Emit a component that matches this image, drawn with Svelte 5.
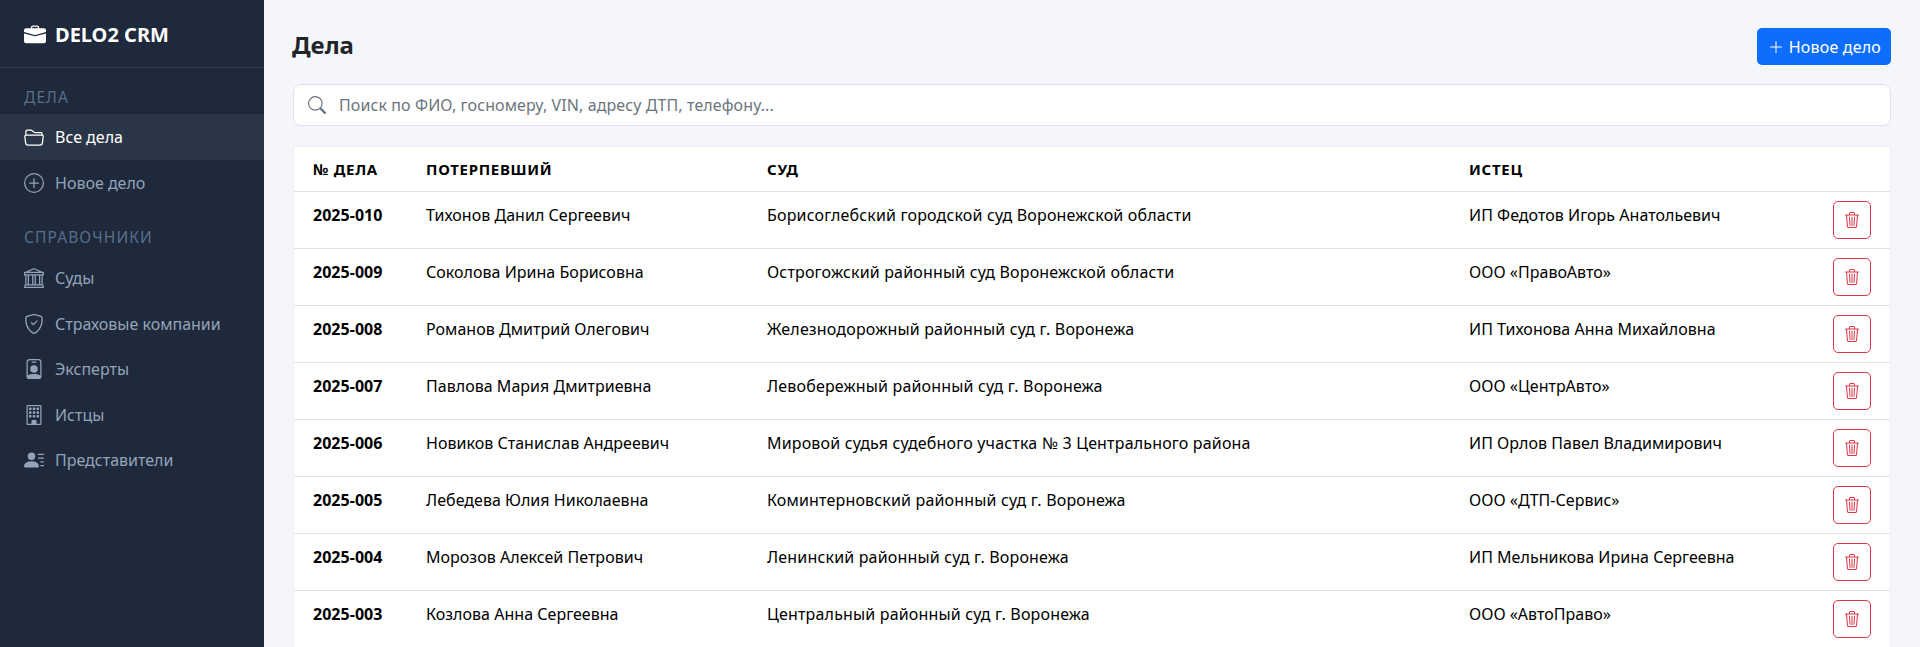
<script>
  const cases = [
    ['2025-010','Тихонов Данил Сергеевич','Борисоглебский городской суд Воронежской области','ИП Федотов Игорь Анатольевич'],
    ['2025-009','Соколова Ирина Борисовна','Острогожский районный суд Воронежской области','ООО «ПравоАвто»'],
    ['2025-008','Романов Дмитрий Олегович','Железнодорожный районный суд г. Воронежа','ИП Тихонова Анна Михайловна'],
    ['2025-007','Павлова Мария Дмитриевна','Левобережный районный суд г. Воронежа','ООО «ЦентрАвто»'],
    ['2025-006','Новиков Станислав Андреевич','Мировой судья судебного участка № 3 Центрального района','ИП Орлов Павел Владимирович'],
    ['2025-005','Лебедева Юлия Николаевна','Коминтерновский районный суд г. Воронежа','ООО «ДТП-Сервис»'],
    ['2025-004','Морозов Алексей Петрович','Ленинский районный суд г. Воронежа','ИП Мельникова Ирина Сергеевна'],
    ['2025-003','Козлова Анна Сергеевна','Центральный районный суд г. Воронежа','ООО «АвтоПраво»']
  ];
  const winX = [4, 7, 10];
  const winY = [2, 5, 8];
</script>

<div class="layout">
  <aside class="sidebar">
    <div class="brand">
      <svg class="brand-ico" viewBox="0 0 16 16" fill="currentColor"><path d="M6.5 1A1.5 1.5 0 0 0 5 2.5V3H1.5A1.5 1.5 0 0 0 0 4.5v1.384l7.614 2.03a1.5 1.5 0 0 0 .772 0L16 5.884V4.5A1.5 1.5 0 0 0 14.5 3H11v-.5A1.5 1.5 0 0 0 9.5 1h-3zm0 1h3a.5.5 0 0 1 .5.5V3H6v-.5a.5.5 0 0 1 .5-.5z"/><path d="M0 12.5A1.5 1.5 0 0 0 1.5 14h13a1.5 1.5 0 0 0 1.5-1.5V6.85L8.129 8.947a.5.5 0 0 1-.258 0L0 6.85v5.65z"/></svg>
      <span>DELO2 CRM</span>
    </div>
    <div class="label first">ДЕЛА</div>
    <a class="item active">
      <svg viewBox="0 0 16 16" fill="currentColor"><path d="M1 3.5A1.5 1.5 0 0 1 2.5 2h2.764c.958 0 1.76.56 2.311 1.184C7.985 3.648 8.48 4 9 4h4.5A1.5 1.5 0 0 1 15 5.5v.64c.57.265.94.876.856 1.546l-.64 5.124A2.5 2.5 0 0 1 12.733 15H3.266a2.5 2.5 0 0 1-2.481-2.19l-.64-5.124A1.5 1.5 0 0 1 1 6.14V3.5zM2 6h12v-.5a.5.5 0 0 0-.5-.5H9c-.964 0-1.71-.629-2.174-1.154C6.374 3.334 5.82 3 5.264 3H2.5a.5.5 0 0 0-.5.5V6zm-.367 1a.5.5 0 0 0-.496.562l.64 5.124A1.5 1.5 0 0 0 3.266 14h9.468a1.5 1.5 0 0 0 1.489-1.314l.64-5.124A.5.5 0 0 0 14.367 7H1.633z"/></svg>
      Все дела
    </a>
    <a class="item">
      <svg viewBox="0 0 16 16" fill="currentColor"><path d="M8 15A7 7 0 1 1 8 1a7 7 0 0 1 0 14zm0 1A8 8 0 1 0 8 0a8 8 0 0 0 0 16z"/><path d="M8 4a.5.5 0 0 1 .5.5v3h3a.5.5 0 0 1 0 1h-3v3a.5.5 0 0 1-1 0v-3h-3a.5.5 0 0 1 0-1h3v-3A.5.5 0 0 1 8 4z"/></svg>
      Новое дело
    </a>
    <div class="label">СПРАВОЧНИКИ</div>
    <a class="item">
      <svg viewBox="0 0 16 16" fill="currentColor"><path d="m8 0 6.61 3h.89a.5.5 0 0 1 .5.5v2a.5.5 0 0 1-.5.5H15v7a.5.5 0 0 1 .485.38l.5 2a.498.498 0 0 1-.485.62H.5a.498.498 0 0 1-.485-.62l.5-2A.501.501 0 0 1 1 13V6H.5a.5.5 0 0 1-.5-.5v-2A.5.5 0 0 1 .5 3h.89L8 0ZM3.777 3h8.447L8 1 3.777 3ZM2 6v7h1V6H2Zm2 0v7h2.5V6H4Zm3.5 0v7h1V6h-1Zm2 0v7H12V6H9.5ZM13 6v7h1V6h-1Zm2-1V4H1v1h14Zm-.39 9H1.39l-.25 1h13.72l-.25-1Z"/></svg>
      Суды
    </a>
    <a class="item">
      <svg viewBox="0 0 16 16" fill="currentColor"><path d="M5.338 1.59a61.44 61.44 0 0 0-2.837.856.481.481 0 0 0-.328.39c-.554 4.157.726 7.19 2.253 9.188a10.725 10.725 0 0 0 2.287 2.233c.346.244.652.42.893.533.12.057.218.095.293.118a.55.55 0 0 0 .101.025.615.615 0 0 0 .1-.025c.076-.023.174-.061.294-.118.24-.113.547-.29.893-.533a10.726 10.726 0 0 0 2.287-2.233c1.527-1.997 2.807-5.031 2.253-9.188a.48.48 0 0 0-.328-.39c-.651-.213-1.75-.56-2.837-.855C9.552 1.29 8.531 1.067 8 1.067c-.53 0-1.552.223-2.662.524zM5.072.56C6.157.265 7.31 0 8 0s1.843.265 2.928.56c1.11.3 2.229.655 2.887.87a1.54 1.54 0 0 1 1.044 1.262c.596 4.477-.787 7.795-2.465 9.99a11.775 11.775 0 0 1-2.517 2.453 7.159 7.159 0 0 1-1.048.625c-.28.132-.581.24-.829.24s-.548-.108-.829-.24a7.158 7.158 0 0 1-1.048-.625 11.777 11.777 0 0 1-2.517-2.453C1.928 10.487.545 7.169 1.141 2.692A1.54 1.54 0 0 1 2.185 1.43 62.456 62.456 0 0 1 5.072.56z"/><path d="M10.854 5.146a.5.5 0 0 1 0 .708l-3 3a.5.5 0 0 1-.708 0l-1.5-1.5a.5.5 0 1 1 .708-.708L7.5 7.793l2.646-2.647a.5.5 0 0 1 .708 0z"/></svg>
      Страховые компании
    </a>
    <a class="item">
      <svg viewBox="0 0 16 16" fill="currentColor"><path d="M6.5 2a.5.5 0 0 0 0 1h3a.5.5 0 0 0 0-1h-3zM11 8a3 3 0 1 1-6 0 3 3 0 0 1 6 0z"/><path d="M4.5 0A2.5 2.5 0 0 0 2 2.5V14a2 2 0 0 0 2 2h8a2 2 0 0 0 2-2V2.5A2.5 2.5 0 0 0 11.5 0h-7zM3 2.5A1.5 1.5 0 0 1 4.5 1h7A1.5 1.5 0 0 1 13 2.5v10.795a4.2 4.2 0 0 0-.776-.492C11.392 12.387 10.063 12 8 12s-3.392.387-4.224.803a4.2 4.2 0 0 0-.776.492V2.5z"/></svg>
      Эксперты
    </a>
    <a class="item">
      <svg viewBox="0 0 16 16" fill="currentColor">
        {#each winX as x}{#each winY as y}<rect x={x} y={y} width="2" height="2" rx=".5"/>{/each}{/each}
        <path d="M2 1a1 1 0 0 1 1-1h10a1 1 0 0 1 1 1v14a1 1 0 0 1-1 1H3a1 1 0 0 1-1-1V1Zm11 0H3v14h3v-2.5a.5.5 0 0 1 .5-.5h3a.5.5 0 0 1 .5.5V15h3V1Z"/>
      </svg>
      Истцы
    </a>
    <a class="item">
      <svg viewBox="0 0 16 16" fill="currentColor"><path d="M6 8a3 3 0 1 0 0-6 3 3 0 0 0 0 6zm-5 6s-1 0-1-1 1-4 6-4 6 3 6 4-1 1-1 1H1zM11 3.5a.5.5 0 0 1 .5-.5h4a.5.5 0 0 1 0 1h-4a.5.5 0 0 1-.5-.5zm.5 2.5a.5.5 0 0 0 0 1h4a.5.5 0 0 0 0-1h-4zm2 3a.5.5 0 0 0 0 1h2a.5.5 0 0 0 0-1h-2zm0 3a.5.5 0 0 0 0 1h2a.5.5 0 0 0 0-1h-2z"/></svg>
      Представители
    </a>
  </aside>

  <main class="main">
    <div class="top">
      <h1>Дела</h1>
      <button class="primary">
        <svg viewBox="0 0 16 16" fill="currentColor"><path d="M8 2a.5.5 0 0 1 .5.5v5h5a.5.5 0 0 1 0 1h-5v5a.5.5 0 0 1-1 0v-5h-5a.5.5 0 0 1 0-1h5v-5A.5.5 0 0 1 8 2Z"/></svg>
        Новое дело
      </button>
    </div>
    <div class="search">
      <svg viewBox="0 0 16 16" fill="currentColor"><path d="M11.742 10.344a6.5 6.5 0 1 0-1.397 1.398h-.001c.03.04.062.078.098.115l3.85 3.85a1 1 0 0 0 1.415-1.414l-3.85-3.85a1.007 1.007 0 0 0-.115-.1zM12 6.5a5.5 5.5 0 1 1-11 0 5.5 5.5 0 0 1 11 0z"/></svg>
      <span>Поиск по ФИО, госномеру, VIN, адресу ДТП, телефону...</span>
    </div>
    <div class="card">
      <table>
        <colgroup><col class="c1"/><col class="c2"/><col class="c3"/><col/><col class="c5"/></colgroup>
        <thead>
          <tr><th>№ дела</th><th>Потерпевший</th><th>Суд</th><th>Истец</th><th></th></tr>
        </thead>
        <tbody>
          {#each cases as c}
            <tr>
              <td class="num">{c[0]}</td>
              <td>{c[1]}</td>
              <td class="court">{c[2]}</td>
              <td>{c[3]}</td>
              <td class="act">
                <button class="del" aria-label="Удалить">
                  <svg viewBox="0 0 16 16" fill="currentColor"><path d="M6.5 1h3a.5.5 0 0 1 .5.5v1H6v-1a.5.5 0 0 1 .5-.5ZM11 2.5v-1A1.5 1.5 0 0 0 9.5 0h-3A1.5 1.5 0 0 0 5 1.5v1H2.506a.58.58 0 0 0-.01 0H1.5a.5.5 0 0 0 0 1h.538l.853 10.66A2 2 0 0 0 4.885 16h6.23a2 2 0 0 0 1.994-1.84l.853-10.66h.538a.5.5 0 0 0 0-1h-.995a.59.59 0 0 0-.01 0H11Zm1.958 1-.846 10.58a1 1 0 0 1-.997.92h-6.23a1 1 0 0 1-.997-.92L3.042 3.5h9.916Zm-7.487 1a.5.5 0 0 1 .528.47l.5 8.5a.5.5 0 0 1-.998.06L5 5.03a.5.5 0 0 1 .47-.53Zm5.058 0a.5.5 0 0 1 .47.53l-.5 8.5a.5.5 0 1 1-.998-.06l.5-8.5a.5.5 0 0 1 .528-.47ZM8 4.5a.5.5 0 0 1 .5.5v8.5a.5.5 0 0 1-1 0V5a.5.5 0 0 1 .5-.5Z"/></svg>
                </button>
              </td>
            </tr>
          {/each}
        </tbody>
      </table>
    </div>
  </main>
</div>

<style>
  :global(body) {
    margin: 0;
    overflow: hidden;
    font-family: "Noto Sans", "Open Sans", sans-serif;
    font-size: 16px;
    line-height: 24px;
    background: #f4f6fb;
  }
  .layout {
    display: flex;
    height: 647px;
    overflow: hidden;
  }
  .sidebar {
    width: 264px;
    flex: none;
    background: #1e293b;
    color: #94a3b8;
  }
  .brand {
    display: flex;
    align-items: center;
    gap: 9px;
    height: 68px;
    box-sizing: border-box;
    padding: 3px 24px 0;
    border-bottom: 1px solid #334155;
    color: #fff;
    font-weight: 700;
    font-size: 20px;
  }
  .brand-ico {
    width: 22px;
    height: 22px;
  }
  .label {
    padding: 21.6px 24px 8px;
    font-size: 15.5px;
    line-height: 20px;
    letter-spacing: 1.1px;
    color: #5a6e8c;
  }
  .label.first {
    padding: 19px 24px 7px;
  }
  .item {
    display: flex;
    align-items: center;
    gap: 11px;
    height: 45.6px;
    padding: 0 24px;
  }
  .item svg {
    width: 20px;
    height: 20px;
    flex: none;
  }
  .item.active {
    height: 46px;
    background: #2a3648;
    color: #fff;
  }
  .main {
    flex: 1;
    min-width: 0;
    padding: 28px 29px 0 29px;
  }
  .top {
    display: flex;
    justify-content: space-between;
    align-items: center;
    height: 37px;
  }
  h1 {
    margin: 0 0 3px -1px;
    font-size: 24px;
    line-height: 32px;
    font-weight: 700;
    color: #212529;
  }
  .primary {
    display: flex;
    align-items: center;
    gap: 5px;
    height: 37px;
    padding: 0 10px 0 11px;
    border: 0;
    border-radius: 5px;
    background: #0d6efd;
    color: #fff;
    font: inherit;
    letter-spacing: .2px;
  }
  .primary svg {
    width: 16px;
    height: 16px;
  }
  .search {
    display: flex;
    align-items: center;
    gap: 13px;
    height: 42px;
    box-sizing: border-box;
    margin-top: 19px;
    padding: 0 14px;
    background: #fff;
    border: 1px solid #dee2e6;
    border-radius: 8px;
    color: #6c757d;
    letter-spacing: .1px;
  }
  .search svg {
    width: 18px;
    height: 18px;
  }
  .card {
    margin-top: 20px;
    background: #fff;
    border: 1px solid #eceef2;
    border-bottom: 0;
    border-radius: 4px 4px 0 0;
  }
  table {
    width: 100%;
    border-collapse: collapse;
    table-layout: fixed;
    color: #000;
  }
  .c1 { width: 113px; }
  .c2 { width: 341px; }
  .c3 { width: 702px; }
  .c5 { width: 76px; }
  th {
    height: 44px;
    padding: 0 0 0 19px;
    text-align: left;
    font-weight: 700;
    font-size: 15px;
    letter-spacing: .7px;
    text-transform: uppercase;
    border-bottom: 1px solid #dee2e6;
  }
  td {
    height: 57px;
    box-sizing: border-box;
    padding: 11px 0 0 19px;
    vertical-align: top;
    border-bottom: 1px solid #dee2e6;
    letter-spacing: .03px;
  }
  td.court {
    letter-spacing: .17px;
  }
  .num {
    font-weight: 700;
  }
  td.act {
    padding: 9px 19px 0 0;
    text-align: right;
  }
  .del {
    display: inline-flex;
    align-items: center;
    justify-content: center;
    width: 38px;
    height: 38px;
    padding: 0;
    background: transparent;
    border: 1px solid #dc3545;
    border-radius: 5px;
    color: #dc3545;
  }
  .del svg {
    width: 16px;
    height: 16px;
  }
</style>
